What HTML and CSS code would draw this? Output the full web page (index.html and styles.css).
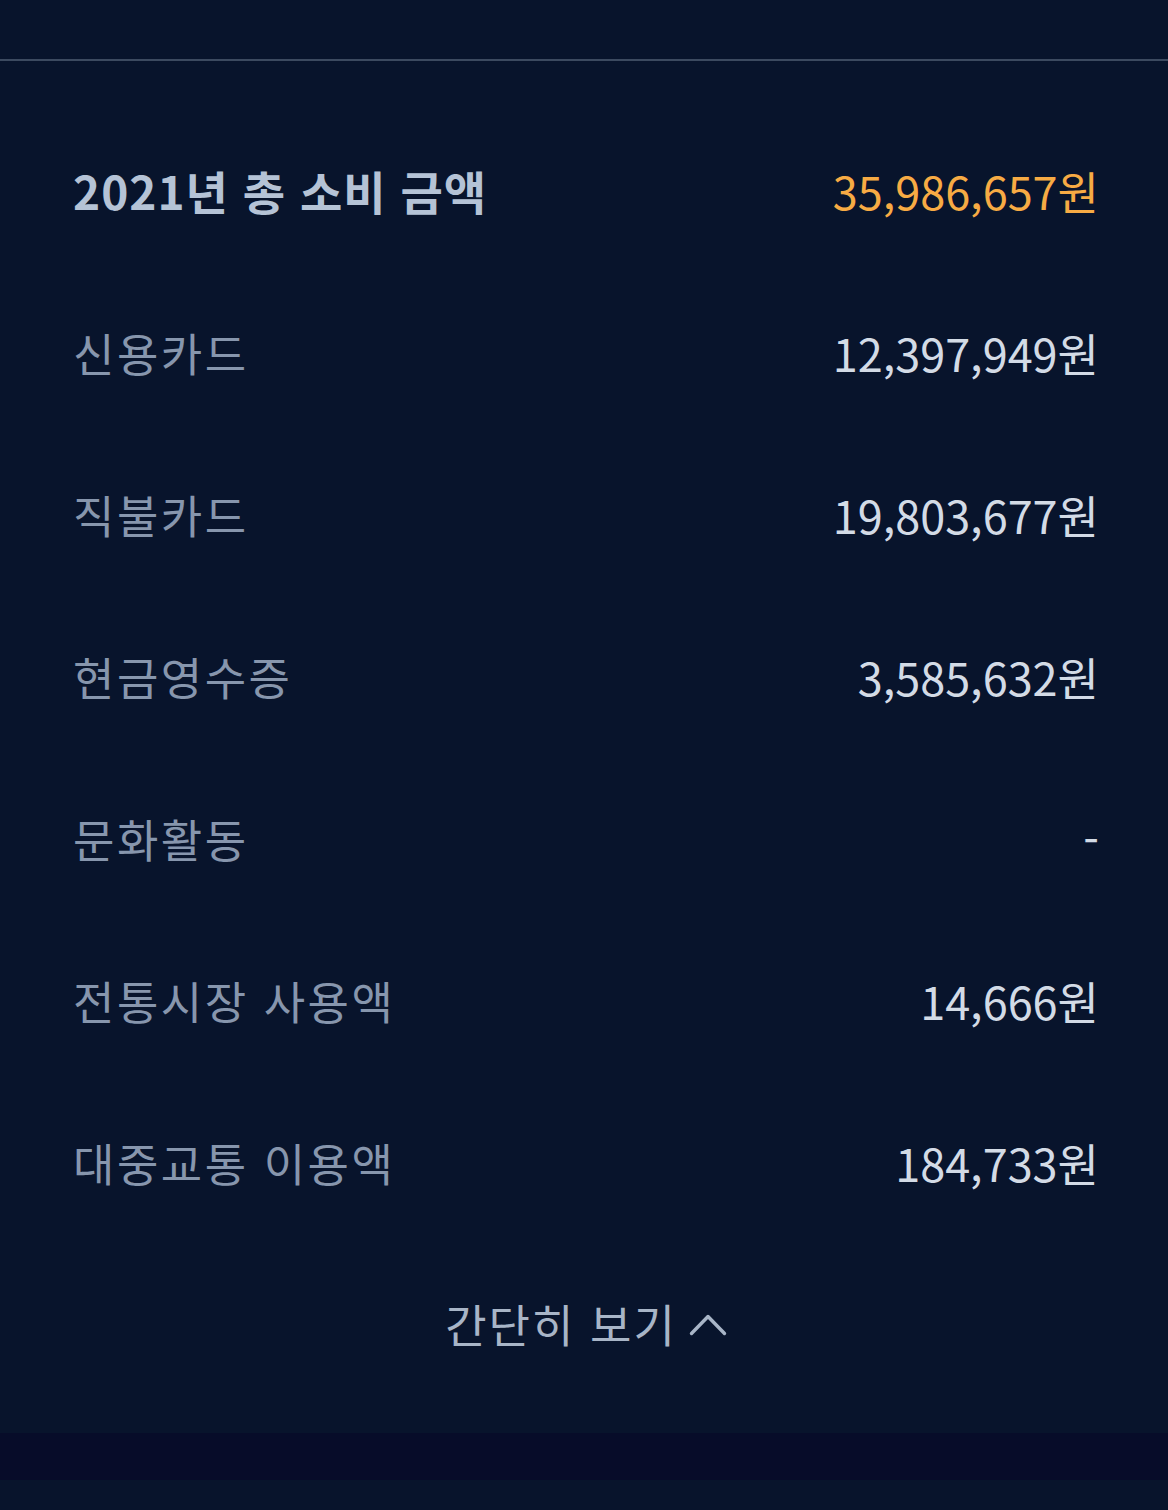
FILE: index.html
```html
<!DOCTYPE html>
<html lang="ko">
<head>
<meta charset="utf-8">
<link rel="stylesheet" href="styles.css">
</head>
<body>
<div class="topbar"></div>
<section class="summary">
  <ul class="list">
    <li class="row row-total"><span class="label">2021년 총 소비 금액</span><span class="value">35,986,657원</span></li>
    <li class="row"><span class="label">신용카드</span><span class="value">12,397,949원</span></li>
    <li class="row"><span class="label">직불카드</span><span class="value">19,803,677원</span></li>
    <li class="row"><span class="label">현금영수증</span><span class="value">3,585,632원</span></li>
    <li class="row"><span class="label">문화활동</span><span class="value">-</span></li>
    <li class="row"><span class="label">전통시장 사용액</span><span class="value">14,666원</span></li>
    <li class="row"><span class="label">대중교통 이용액</span><span class="value">184,733원</span></li>
  </ul>
  <button class="toggle" type="button"><span class="toggle-text">간단히 보기</span><svg class="chev" width="38" height="24" viewBox="0 0 38 24"><path d="M2.5 21.5 L19 4.5 L35.5 21.5" fill="none" stroke="currentColor" stroke-width="3.4" stroke-linecap="round" stroke-linejoin="round"/></svg></button>
</section>
<div class="band"></div>
</body>
</html>
```
FILE: styles.css
```css
html, body {
  margin: 0;
  padding: 0;
  background: #08142c;
}
body {
  font-family: "Noto Sans CJK KR", "Noto Sans", sans-serif;
  height: 1510px;
  overflow: hidden;
}
.topbar {
  box-sizing: border-box;
  height: 61px;
  border-bottom: 2px solid #3c4a60;
}
.summary {
  padding: 48px 69px 0 73px;
}
.list {
  list-style: none;
  margin: 0;
  padding: 0;
}
.row {
  height: 162px;
  display: flex;
  align-items: center;
  justify-content: space-between;
  font-size: 45px;
}
.label {
  color: #8796ad;
  letter-spacing: 2.5px;
}
.value {
  color: #d3dbe6;
}
.row-total .label {
  color: #b5c3d6;
  font-weight: 700;
  font-size: 46px;
  letter-spacing: 1px;
}
.row-total .value {
  color: #f7ab44;
}
.toggle {
  display: flex;
  align-items: center;
  justify-content: center;
  gap: 12px;
  width: 100%;
  height: 160px;
  background: none;
  border: 0;
  padding: 0;
  font-family: inherit;
  font-size: 45px;
  color: #a8b5c7;
}
.toggle-text {
  letter-spacing: 2px;
}
.chev {
  display: block;
  margin-top: 2px;
}
.band {
  margin-top: 30px;
  height: 47px;
  background: #070c29;
}
```
